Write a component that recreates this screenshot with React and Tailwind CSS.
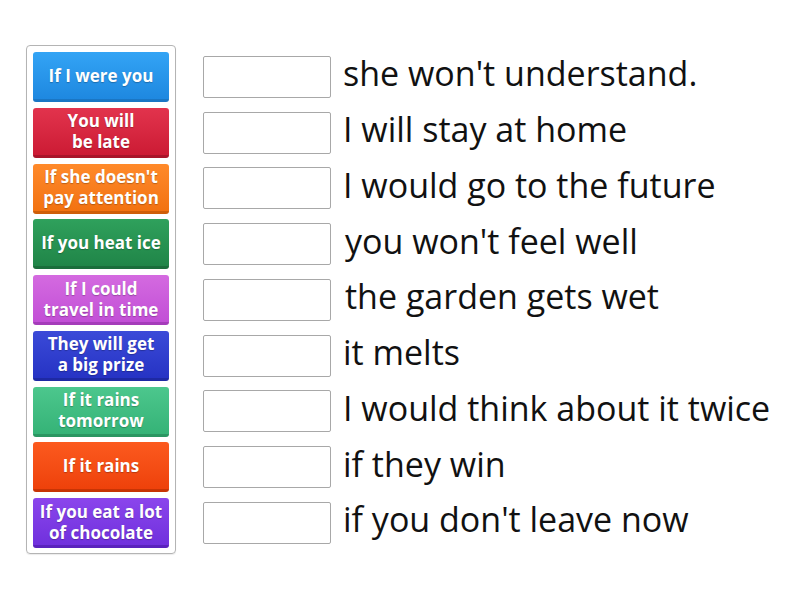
import React from 'react';

const cards = [
  { text: 'If I were you', cls: 'from-[#33a4f5] to-[#1e88e0] border-[#1a76c4]' },
  { lines: ['You will', 'be late'], cls: 'from-[#e2334d] to-[#cc1a34] border-[#a9142a]' },
  { lines: ["If she doesn't", 'pay attention'], cls: 'from-[#ff8a2a] to-[#f27210] border-[#cf5e08]' },
  { text: 'If you heat ice', cls: 'from-[#2fa15c] to-[#208548] border-[#1a6d3b]' },
  { lines: ['If I could', 'travel in time'], cls: 'from-[#d46ae0] to-[#c24fd6] border-[#a53cba]' },
  { lines: ['They will get', 'a big prize'], cls: 'from-[#3b4ad8] to-[#2633c4] border-[#1e29a3]' },
  { lines: ['If it rains', 'tomorrow'], cls: 'from-[#4cc78d] to-[#35b377] border-[#2a9662]' },
  { text: 'If it rains', cls: 'from-[#fc5a1e] to-[#ee410a] border-[#c73405]' },
  { lines: ['If you eat a lot', 'of chocolate'], cls: 'from-[#8b45ec] to-[#7030dd] border-[#5a22bd]' },
];

const answers = [
  { text: "she won't understand.", x: 'pl-[12px]' },
  { text: 'I will stay at home', x: 'pl-[12px]' },
  { text: 'I would go to the future', x: 'pl-[12px]' },
  { text: "you won't feel well", x: 'pl-[14px]' },
  { text: 'the garden gets wet', x: 'pl-[14px]' },
  { text: 'it melts', x: 'pl-[12px]' },
  { text: 'I would think about it twice', x: 'pl-[12px]' },
  { text: 'if they win', x: 'pl-[12px]' },
  { text: "if you don't leave now", x: 'pl-[12px]' },
];

export default function App() {
  return (
    <div className="w-[800px] h-[600px] bg-white flex items-start pt-[45px] pl-[26px] font-['Open_Sans',sans-serif]">
      <div className="w-[150px] border border-[#b4b4b4] rounded-[4px] px-[6px] pt-[6px] pb-[5px] flex flex-col gap-[5.75px] shadow-[0_1px_1px_rgba(0,0,0,0.08)]">
        {cards.map((c, i) => (
          <div
            key={i}
            className={`h-[50px] rounded-[3px] bg-gradient-to-b border-b-[3px] ${c.cls} flex flex-col items-center justify-center text-white font-bold text-[17px] leading-[21px] text-center [text-shadow:0_1px_1px_rgba(0,0,0,0.25)]`}
          >
            {c.lines ? c.lines.map((l, j) => <span key={j} className="whitespace-nowrap">{l}</span>) : <span className="whitespace-nowrap">{c.text}</span>}
          </div>
        ))}
      </div>
      <div className="ml-[27px] pt-[4px] flex flex-col">
        {answers.map((a, i) => (
          <div key={i} className="h-[55.75px] flex items-center">
            <div className="w-[128px] h-[42px] border border-[#a8a8a8] rounded-[2px] bg-white shrink-0" />
            <span className={`${a.x} text-[34px] text-[#111] whitespace-nowrap leading-none -mt-[7px]`}>{a.text}</span>
          </div>
        ))}
      </div>
    </div>
  );
}
